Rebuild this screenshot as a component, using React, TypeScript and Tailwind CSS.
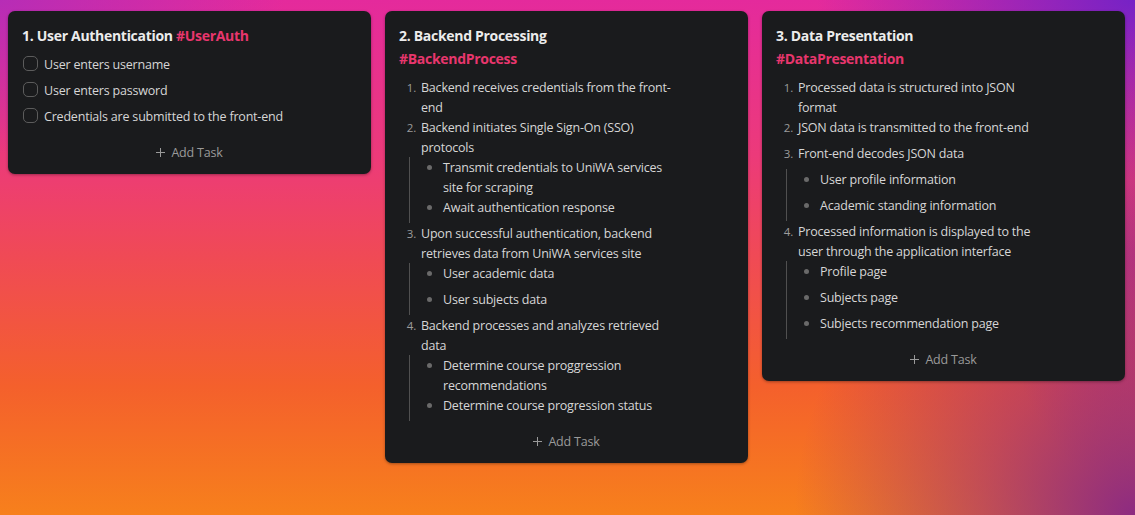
import React from 'react'

type SubItem = { lines: string[] }
type Step = { lines: string[]; children?: SubItem[] }

interface Column {
  title: string
  tag: string
  tagInline?: boolean
  checklist?: string[]
  steps?: Step[]
}

const columns: Column[] = [
  {
    title: '1. User Authentication',
    tag: '#UserAuth',
    tagInline: true,
    checklist: ['User enters username', 'User enters password', 'Credentials are submitted to the front-end']
  },
  {
    title: '2. Backend Processing',
    tag: '#BackendProcess',
    steps: [
      { lines: ['Backend receives credentials from the front-', 'end'] },
      {
        lines: ['Backend initiates Single Sign-On (SSO)', 'protocols'],
        children: [
          { lines: ['Transmit credentials to UniWA services', 'site for scraping'] },
          { lines: ['Await authentication response'] }
        ]
      },
      {
        lines: ['Upon successful authentication, backend', 'retrieves data from UniWA services site'],
        children: [{ lines: ['User academic data'] }, { lines: ['User subjects data'] }]
      },
      {
        lines: ['Backend processes and analyzes retrieved', 'data'],
        children: [
          { lines: ['Determine course proggression', 'recommendations'] },
          { lines: ['Determine course progression status'] }
        ]
      }
    ]
  },
  {
    title: '3. Data Presentation',
    tag: '#DataPresentation',
    steps: [
      { lines: ['Processed data is structured into JSON', 'format'] },
      { lines: ['JSON data is transmitted to the front-end'] },
      {
        lines: ['Front-end decodes JSON data'],
        children: [{ lines: ['User profile information'] }, { lines: ['Academic standing information'] }]
      },
      {
        lines: ['Processed information is displayed to the', 'user through the application interface'],
        children: [
          { lines: ['Profile page'] },
          { lines: ['Subjects page'] },
          { lines: ['Subjects recommendation page'] }
        ]
      }
    ]
  }
]

// 折り返し位置を参照画像に合わせて固定
const Lines = ({ lines }: { lines: string[] }) => (
  <span className="block translate-y-px">
    {lines.map((l, i) => (
      <span key={i} className="block whitespace-nowrap">
        {l}
      </span>
    ))}
  </span>
)

const AddTask = () => (
  <div className="mt-[11px] flex h-[20px] items-center justify-center gap-[6px] text-[12.5px] tracking-[-0.2px] text-[#9a9a9a]">
    <svg width="9" height="9" viewBox="0 0 9 9" className="mb-[1px]">
      <path d="M4.5 0v9M0 4.5h9" stroke="#9a9a9a" strokeWidth="1" fill="none" />
    </svg>
    <span>Add Task</span>
  </div>
)

const Card = ({ col }: { col: Column }) => (
  <div className="w-[363px] shrink-0 rounded-[7px] bg-[#1a1b1d] px-[14px] pt-[15px] pb-[11px] shadow-[0_1px_3px_rgba(0,0,0,0.35)]">
    {col.tagInline ? (
      <div className="h-[20px] text-[14px] font-bold leading-[20px] tracking-[-0.3px] text-[#ececec]">
        {col.title} <span className="text-[#e8366d]">{col.tag}</span>
      </div>
    ) : (
      <>
        <div className="h-[20px] text-[14px] font-bold leading-[20px] tracking-[-0.3px] text-[#ececec]">
          {col.title}
        </div>
        <div className="mt-[3px] h-[20px] text-[14px] font-bold leading-[20px] tracking-[-0.3px] text-[#e8366d]">
          {col.tag}
        </div>
      </>
    )}

    {col.checklist && (
      <div className="mt-[8px]">
        {col.checklist.map((c) => (
          <div key={c} className="flex h-[26px] items-start">
            <span className="ml-px mt-[2px] h-[15px] w-[15px] rounded-[5px] border border-[#5c5c5c]" />
            <span className="ml-[6px] translate-y-px text-[12.5px] leading-[20px] tracking-[-0.2px] text-[#d6d6d6]">
              {c}
            </span>
          </div>
        ))}
      </div>
    )}

    {col.steps && (
      <ol className="mt-[8px]">
        {col.steps.map((s, i) => (
          <li key={i}>
            <div className="flex min-h-[26px] items-start text-[12.5px] leading-[20px] tracking-[-0.2px] text-[#d6d6d6]">
              <span className="w-[22px] shrink-0 translate-y-px pr-[5px] text-right text-[11.5px] text-[#9c9c9c]">
                {i + 1}.
              </span>
              <Lines lines={s.lines} />
            </div>
            {s.children && (
              <ul className="ml-[10px] border-l border-[#505050] pl-[17px]">
                {s.children.map((c, j) => (
                  <li
                    key={j}
                    className="flex min-h-[26px] items-start text-[12.5px] leading-[20px] tracking-[-0.2px] text-[#d6d6d6]"
                  >
                    <span className="mt-[8px] mr-[11px] h-[5px] w-[5px] shrink-0 rounded-full bg-[#6a6a6a]" />
                    <Lines lines={c.lines} />
                  </li>
                ))}
              </ul>
            )}
          </li>
        ))}
      </ol>
    )}

    <AddTask />
  </div>
)

export default function App() {
  return (
    <div
      className="relative h-[515px] w-[1135px] overflow-hidden bg-[image:radial-gradient(ellipse_30%_65%_at_100%_100%,rgba(135,38,135,0.95)_0%,rgba(150,40,130,0.55)_45%,rgba(150,40,130,0)_100%),radial-gradient(ellipse_12%_45%_at_100%_50%,rgba(150,40,150,0.6)_0%,rgba(150,40,150,0)_100%),radial-gradient(ellipse_28%_35%_at_100%_0%,rgba(118,34,198,1)_0%,rgba(118,34,198,0)_100%),radial-gradient(ellipse_25%_30%_at_0%_0%,rgba(178,45,185,0.9)_0%,rgba(178,45,185,0)_100%),linear-gradient(180deg,#e42a9c_0%,#ec3a7a_30%,#f04a55_50%,#f4602c_75%,#f7801c_100%)]"
      style={{ fontFamily: '"Open Sans", "Noto Sans", sans-serif' }}
    >
      <div className="flex items-start gap-[14px] pl-[8px] pt-[11px]">
        {columns.map((c) => (
          <Card key={c.title} col={c} />
        ))}
      </div>
    </div>
  )
}
